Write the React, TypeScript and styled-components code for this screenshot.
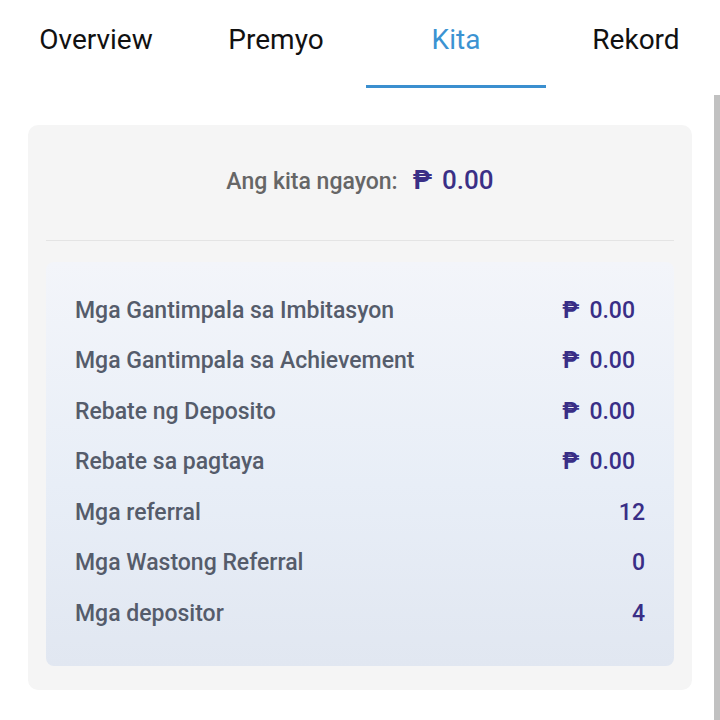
import styled, { createGlobalStyle } from 'styled-components';

const GlobalStyle = createGlobalStyle`
  html, body {
    margin: 0;
    padding: 0;
    background: #ffffff;
  }
  body {
    font-family: Roboto, "Noto Sans", sans-serif;
  }
`;

const Page = styled.div`
  position: relative;
  width: 720px;
  height: 720px;
  overflow: hidden;
  background: #ffffff;
`;

const TabBar = styled.div`
  display: flex;
  padding-left: 6px;
  height: 88px;
`;

const Tab = styled.div<{ $active?: boolean }>`
  flex: 0 0 180px;
  display: flex;
  justify-content: center;
  padding-top: 23px;
  box-sizing: border-box;
  font-size: 28px;
  color: ${(p) => (p.$active ? '#3b93d2' : '#111111')};
  border-bottom: 3px solid ${(p) => (p.$active ? '#3b8fcf' : 'transparent')};
`;

// overlay scrollbar on the right edge
const ScrollThumb = styled.div`
  position: absolute;
  right: 0;
  top: 95px;
  bottom: 0;
  width: 6px;
  background: #c1c1c1;
`;

const Card = styled.div`
  margin: 37px 28px 0 28px;
  height: 565px;
  box-sizing: border-box;
  background: #f5f5f5;
  border-radius: 10px;
  padding: 0 18px;
  display: flex;
  flex-direction: column;
`;

const TodayRow = styled.div`
  display: flex;
  justify-content: center;
  align-items: baseline;
  gap: 15px;
  height: 116px;
  padding-top: 40px;
  box-sizing: border-box;
  border-bottom: 1px solid #e4e4e4;
`;

const TodayLabel = styled.span`
  font-size: 23px;
  font-weight: 500;
  color: #666666;
`;

const TodayValue = styled.span`
  font-size: 26px;
  font-weight: 500;
  color: #3a2f86;
`;

const Stats = styled.div`
  margin-top: 21px;
  height: 404px;
  box-sizing: border-box;
  border-radius: 8px;
  background: linear-gradient(180deg, #f3f5fa 0%, #e8eef7 55%, #e1e7f1 100%);
  padding: 23px 29px 0 29px;
  display: flex;
  flex-direction: column;
`;

const StatRow = styled.div<{ $money?: boolean }>`
  display: flex;
  justify-content: space-between;
  align-items: center;
  height: 50.5px;
  padding-right: ${(p) => (p.$money ? '10px' : '0')};
`;

const StatLabel = styled.span`
  font-size: 23px;
  font-weight: 500;
  color: #555c6b;
`;

const StatValue = styled.span`
  font-size: 23px;
  font-weight: 500;
  color: #392e86;
`;

const Peso = styled.span`
  font-weight: 700;
  margin-right: 10px;
`;

const rows = [
  { label: 'Mga Gantimpala sa Imbitasyon', value: '0.00', money: true },
  { label: 'Mga Gantimpala sa Achievement', value: '0.00', money: true },
  { label: 'Rebate ng Deposito', value: '0.00', money: true },
  { label: 'Rebate sa pagtaya', value: '0.00', money: true },
  { label: 'Mga referral', value: '12', money: false },
  { label: 'Mga Wastong Referral', value: '0', money: false },
  { label: 'Mga depositor', value: '4', money: false },
];

const tabs = ['Overview', 'Premyo', 'Kita', 'Rekord'];

export default function App() {
  return (
    <Page>
      <GlobalStyle />
      <TabBar>
        {tabs.map((t) => (
          <Tab key={t} $active={t === 'Kita'}>
            {t}
          </Tab>
        ))}
      </TabBar>
      <Card>
        <TodayRow>
          <TodayLabel>Ang kita ngayon:</TodayLabel>
          <TodayValue>
            <Peso>₱</Peso>0.00
          </TodayValue>
        </TodayRow>
        <Stats>
          {rows.map((r) => (
            <StatRow key={r.label} $money={r.money}>
              <StatLabel>{r.label}</StatLabel>
              <StatValue>
                {r.money && <Peso>₱</Peso>}
                {r.value}
              </StatValue>
            </StatRow>
          ))}
        </Stats>
      </Card>
      <ScrollThumb />
    </Page>
  );
}
